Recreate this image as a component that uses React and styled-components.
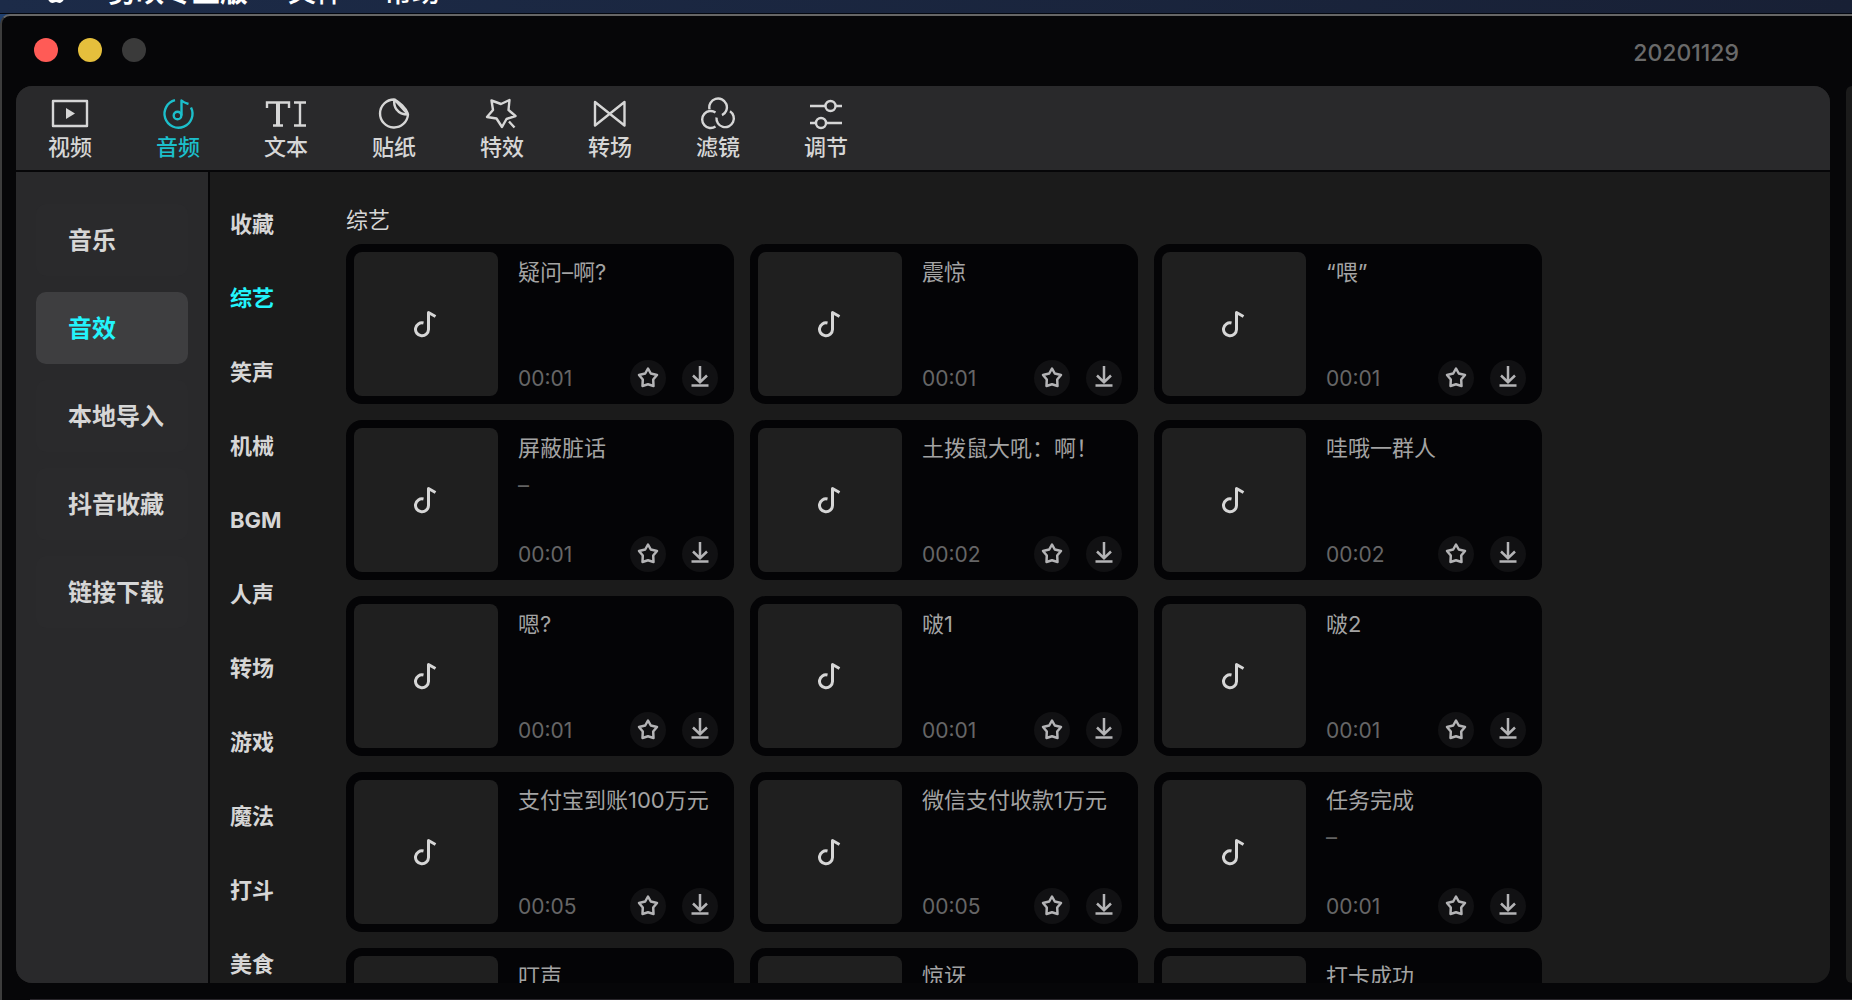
import * as React from 'react';
import styled, { createGlobalStyle, css } from 'styled-components';

const tools = [
    { id: 'video', label: '视频' },
    { id: 'audio', label: '音频' },
    { id: 'text', label: '文本' },
    { id: 'sticker', label: '贴纸' },
    { id: 'effect', label: '特效' },
    { id: 'transition', label: '转场' },
    { id: 'filter', label: '滤镜' },
    { id: 'adjust', label: '调节' }
];

const sources = ['音乐', '音效', '本地导入', '抖音收藏', '链接下载'];

const categories = ['收藏', '综艺', '笑声', '机械', 'BGM', '人声', '转场', '游戏', '魔法', '打斗', '美食'];

const sounds = [
    { title: '疑问–啊?', time: '00:01' },
    { title: '震惊', time: '00:01' },
    { title: '“喂”', time: '00:01' },
    { title: '屏蔽脏话', note: '–', time: '00:01' },
    { title: '土拨鼠大吼：啊！', time: '00:02' },
    { title: '哇哦一群人', time: '00:02' },
    { title: '嗯?', time: '00:01' },
    { title: '啵1', time: '00:01' },
    { title: '啵2', time: '00:01' },
    { title: '支付宝到账100万元', time: '00:05' },
    { title: '微信支付收款1万元', time: '00:05' },
    { title: '任务完成', note: '–', time: '00:01' },
    { title: '叮声', time: '00:01' },
    { title: '惊讶', time: '00:01' },
    { title: '打卡成功', time: '00:01' }
];

const toolIcons = {
    video: (
        <>
            <rect x="3" y="4" width="34" height="25" />
            <path d="M16 11v11l9-5.500z" fill="currentColor" stroke="none" />
        </>
    ),
    audio: (
        <>
            <path d="M17 3.200A14 14 0 1 0 33 10.500" />
            <path d="M23.500 18.500V3.500C25 5 27 6 30.500 7" />
            <circle cx="19.500" cy="18.500" r="3.800" />
        </>
    ),
    text: (
        <>
            <path d="M1 11V5.500H23V11" strokeLinejoin="miter" />
            <path d="M12 5.500V28" strokeWidth="4" />
            <path d="M7 28.500H17M28 5.500H40M28 28.500H40M34 5.500V28.500" />
        </>
    ),
    sticker: (
        <>
            <path d="M20 2.500A14 14 0 1 0 34 17.500L20.500 2.500C19 9 23 17.500 34 17.500" />
            <path d="M20.500 2.500C25 5 32 11 34 17" />
        </>
    ),
    effect: (
        <path d="M9.500 3.500L19 7L27.500 3L26.500 13L33.500 19L24.500 22L20 30L14.500 21.500L5 20L11 13ZM27 24.500L32.500 30.500" />
    ),
    transition: (
        <path d="M5 5L34.500 28.500V5L5 28.500Z" />
    ),
    filter: (
        <>
            <path d="M11.500 12.200A8.800 8.800 0 1 1 24 18.200" />
            <path d="M17.500 15.500A8.500 8.500 0 1 0 17.500 29.500" />
            <path d="M32 14.200A8.700 8.700 0 1 1 18.500 20.500" />
        </>
    ),
    adjust: (
        <>
            <path d="M4 9H19.500M29.500 9H36M4 26H10M20 26H36" />
            <circle cx="24.500" cy="9" r="5" />
            <circle cx="15" cy="26" r="5" />
        </>
    )
};

const ToolIcon = ({ name }) => (
    <svg width="42" height="34" viewBox="-1 0 42 34" fill="none" stroke="currentColor" strokeWidth="2.400" strokeLinejoin="round" aria-hidden="true">
        {toolIcons[name]}
    </svg>
);

const NoteIcon = () => (
    <svg width="24" height="28" viewBox="1 0 24 28" fill="none" stroke="currentColor" strokeWidth="3" strokeLinejoin="round" aria-hidden="true">
        <path d="M10.500 13A6.500 6.500 0 1 0 15.500 19.500V2.500L22.500 6.500" />
    </svg>
);

const StarIcon = () => (
    <svg width="24" height="24" viewBox="0 0 24 24" fill="none" stroke="currentColor" strokeWidth="2.500" strokeLinejoin="round" aria-hidden="true">
        <path d="M12 2.500L14.800 7.500L21 9L17.200 13.500L17.500 20L12 18.300L6.500 20L6.800 13.500L3 9L9.200 7.500Z" />
    </svg>
);

const DownloadIcon = () => (
    <svg width="24" height="24" viewBox="0 0 24 24" fill="none" stroke="currentColor" strokeWidth="2.500" aria-hidden="true">
        <path d="M12 0V16M5 9.500L12 16.200L19 9.500M3.500 19.500H20.500" />
    </svg>
);

const SoundCard = ({ title, note, time }) => (
    <Card>
        <Cover><NoteIcon /></Cover>
        <Info>
            <SoundTitle>{title}</SoundTitle>
            {note && <Note>{note}</Note>}
            <Footer>
                <Time>{time}</Time>
                <RoundButton type="button" aria-label="收藏"><StarIcon /></RoundButton>
                <RoundButton type="button" aria-label="下载"><DownloadIcon /></RoundButton>
            </Footer>
        </Info>
    </Card>
);

export default function App() {
    const [tool, setTool] = React.useState('audio');
    const [source, setSource] = React.useState('音效');
    const [category, setCategory] = React.useState('综艺');

    return (
        <Desktop>
            <GlobalStyle />
            <MenuBar>
                <svg width="24" height="30" viewBox="-1 -1 24 30" fill="currentColor" aria-hidden="true">
                    <path d="M11 7C8 5 1 6 1 14c0 5 3 11 6.500 11 1.500 0 2-1 3.500-1s2 1 3.500 1C17.500 25 20 20 20.500 18c-5-2-5-8 0-10C17 5 14 6 11 7z" />
                </svg>
                <b>剪映专业版</b>
                <span>文件</span>
                <span>帮助</span>
            </MenuBar>
            <Window>
                <TitleBar>
                    <Light $color="#ff5b56" />
                    <Light $color="#e5bf3c" />
                    <Light $color="#3a3a3a" />
                    <ProjectName>20201129</ProjectName>
                </TitleBar>
                <Workspace>
                    <Panel>
                        <Toolbar>
                            {tools.map((item) => (
                                <ToolButton key={item.id} type="button" $active={item.id === tool} onClick={() => setTool(item.id)}>
                                    <ToolIcon name={item.id} />
                                    {item.label}
                                </ToolButton>
                            ))}
                        </Toolbar>
                        <Body>
                            <Sidebar>
                                {sources.map((item) => (
                                    <SourceButton key={item} type="button" $active={item === source} onClick={() => setSource(item)}>
                                        {item}
                                    </SourceButton>
                                ))}
                            </Sidebar>
                            <Categories>
                                {categories.map((item) => (
                                    <CategoryButton key={item} type="button" $active={item === category} onClick={() => setCategory(item)}>
                                        {item}
                                    </CategoryButton>
                                ))}
                            </Categories>
                            <Library>
                                <Heading>{category}</Heading>
                                <Grid>
                                    {sounds.map((item) => <SoundCard key={item.title} {...item} />)}
                                </Grid>
                            </Library>
                        </Body>
                    </Panel>
                    <NextPanel />
                </Workspace>
                <Timeline />
            </Window>
        </Desktop>
    );
}

const GlobalStyle = createGlobalStyle`
    * {
        box-sizing: border-box;
    }

    body {
        margin: 0;
        background: #1f3f6e;
        font-family: Inter, "Noto Sans CJK SC", sans-serif;
        color: #d6d6d6;
    }

    button {
        margin: 0;
        padding: 0;
        border: 0;
        background: none;
        color: inherit;
        font: inherit;
        cursor: pointer;
    }
`;

const Desktop = styled.div`
    display: flex;
    flex-direction: column;
    height: 100vh;
    overflow: hidden;
`;

const MenuBar = styled.div`
    flex: none;
    display: flex;
    align-items: flex-end;
    gap: 40px;
    height: 14px;
    padding: 0 44px 6px;
    border-bottom: 1px solid #030710;
    background: linear-gradient(90deg, #1c2b48, #182035);
    color: #fff;
    font-size: 28px;
    line-height: 30px;
    white-space: nowrap;

    svg {
        flex: none;
    }

    span {
        font-weight: 500;
    }
`;

const Window = styled.div`
    flex: 1;
    min-height: 0;
    display: flex;
    flex-direction: column;
    border-top: 2px solid #666;
    border-left: 2px solid #3c3c3c;
    border-top-left-radius: 10px;
    background: #060608;
`;

const TitleBar = styled.div`
    flex: none;
    display: flex;
    align-items: center;
    gap: 20px;
    height: 70px;
    padding: 0 113px 2px 32px;
`;

const Light = styled.span`
    width: 24px;
    height: 24px;
    border-radius: 50%;
    background: ${(props) => props.$color};
`;

const ProjectName = styled.div`
    margin-left: auto;
    padding-top: 6px;
    color: #6a6a6a;
    font-size: 23px;
    font-weight: 500;
    line-height: 28px;
`;

const Workspace = styled.div`
    flex: 1;
    min-height: 0;
    display: flex;
    gap: 16px;
    padding-left: 14px;
`;

const Panel = styled.div`
    flex: 1;
    min-width: 0;
    display: flex;
    flex-direction: column;
    border-radius: 16px;
    overflow: hidden;
    background: #1b1b1b;
`;

const NextPanel = styled.div`
    flex: none;
    width: 6px;
    border-radius: 16px 0 0 16px;
    background: #1b1b1b;
`;

const Timeline = styled.div`
    flex: none;
    height: 1px;
    margin: 16px 0 0 28px;
    background: #29262b;
`;

const Toolbar = styled.div`
    flex: none;
    display: flex;
    height: 86px;
    border-bottom: 2px solid #060608;
    background: #29292b;
`;

const ToolButton = styled.button`
    display: flex;
    flex-direction: column;
    align-items: center;
    width: 108px;
    padding-top: 11px;
    color: ${(props) => (props.$active ? '#1cbfcb' : '#d6d6d6')};
    font-size: 22px;
    font-weight: 500;
    line-height: 32px;
`;

const Body = styled.div`
    flex: 1;
    min-height: 0;
    display: flex;
`;

const Sidebar = styled.div`
    flex: none;
    display: flex;
    flex-direction: column;
    gap: 16px;
    width: 194px;
    padding: 32px 20px;
    border-right: 2px solid #060608;
    background: #29292b;
`;

const activeSource = css`
    background: #3e3e40;
    color: #23f4fc;
`;

const SourceButton = styled.button`
    flex: none;
    height: 72px;
    padding: 2px 0 0 32px;
    border-radius: 10px;
    background: #2a2a2c;
    font-size: 24px;
    font-weight: 700;
    line-height: 36px;
    text-align: left;
    ${(props) => props.$active && activeSource}
`;

const Categories = styled.div`
    flex: none;
    display: flex;
    flex-direction: column;
    width: 136px;
    padding: 15px 20px 0;
`;

const CategoryButton = styled.button`
    flex: none;
    height: 74px;
    color: ${(props) => (props.$active ? '#23f4fc' : '#d6d6d6')};
    font-size: 22px;
    font-weight: 700;
    line-height: 32px;
    text-align: left;
`;

const Library = styled.div`
    flex: 1;
    min-width: 0;
    overflow: hidden;
    padding-top: 32px;
`;

const Heading = styled.h2`
    margin: 0 0 8px;
    color: #d6d6d6;
    font-size: 22px;
    font-weight: 400;
    line-height: 32px;
`;

const Grid = styled.div`
    display: grid;
    grid-template-columns: repeat(3, 388px);
    gap: 16px;
`;

const Card = styled.article`
    display: flex;
    height: 160px;
    padding: 8px;
    border-radius: 16px;
    background: #040406;
`;

const Cover = styled.div`
    flex: none;
    display: flex;
    align-items: center;
    justify-content: center;
    width: 144px;
    border-radius: 8px;
    background: #1f1f1f;
    color: #d6d6d6;
`;

const Info = styled.div`
    flex: 1;
    min-width: 0;
    display: flex;
    flex-direction: column;
    padding: 4px 8px 0 20px;
`;

const SoundTitle = styled.div`
    color: #a3a3a3;
    font-size: 22px;
    line-height: 32px;
    white-space: nowrap;
`;

const Note = styled.div`
    color: #636363;
    font-size: 22px;
    line-height: 42px;
`;

const Footer = styled.div`
    display: flex;
    align-items: center;
    gap: 16px;
    margin-top: auto;
`;

const Time = styled.span`
    margin-right: auto;
    padding-top: 2px;
    color: #666;
    font-size: 21px;
    line-height: 32px;
`;

const RoundButton = styled.button`
    display: flex;
    align-items: center;
    justify-content: center;
    width: 36px;
    height: 36px;
    border-radius: 50%;
    background: #111113;
    color: #b4b4b6;
`;
